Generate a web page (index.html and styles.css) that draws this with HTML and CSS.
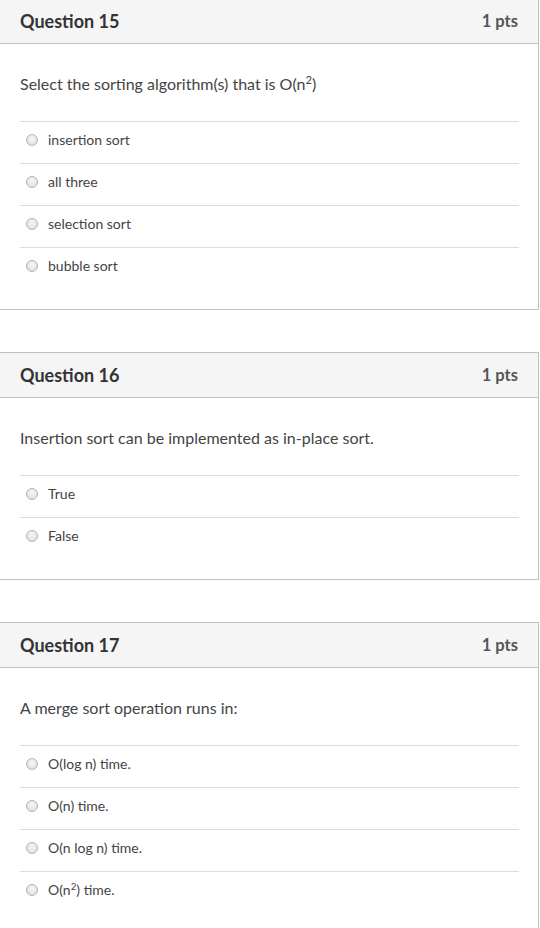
FILE: index.html
```html
<!DOCTYPE html>
<html lang="en">
<head>
<meta charset="utf-8">
<link rel="stylesheet" href="styles.css">
</head>
<body>
<div class="page">
  <section class="card">
    <header class="card-header"><h2 class="title">Question 15</h2><span class="pts">1 pts</span></header>
    <div class="card-body">
      <p class="question">Select the sorting algorithm(s) that is O(n<sup>2</sup>)</p>
      <ul class="answers">
        <li class="answer"><span class="radio"></span><span class="label">insertion sort</span></li>
        <li class="answer"><span class="radio"></span><span class="label">all three</span></li>
        <li class="answer"><span class="radio"></span><span class="label">selection sort</span></li>
        <li class="answer"><span class="radio"></span><span class="label">bubble sort</span></li>
      </ul>
    </div>
  </section>
  <section class="card">
    <header class="card-header"><h2 class="title">Question 16</h2><span class="pts">1 pts</span></header>
    <div class="card-body">
      <p class="question">Insertion sort can be implemented as in-place sort.</p>
      <ul class="answers">
        <li class="answer"><span class="radio"></span><span class="label">True</span></li>
        <li class="answer"><span class="radio"></span><span class="label">False</span></li>
      </ul>
    </div>
  </section>
  <section class="card">
    <header class="card-header"><h2 class="title">Question 17</h2><span class="pts">1 pts</span></header>
    <div class="card-body">
      <p class="question">A merge sort operation runs in:</p>
      <ul class="answers">
        <li class="answer"><span class="radio"></span><span class="label">O(log n) time.</span></li>
        <li class="answer"><span class="radio"></span><span class="label">O(n) time.</span></li>
        <li class="answer"><span class="radio"></span><span class="label">O(n log n) time.</span></li>
        <li class="answer"><span class="radio"></span><span class="label">O(n<sup>2</sup>) time.</span></li>
      </ul>
    </div>
  </section>
</div>
</body>
</html>
```
FILE: styles.css
```css
html, body {
  margin: 0;
  padding: 0;
  background: #fff;
}
body {
  font-family: Lato, "Open Sans", sans-serif;
  color: #2d3b45;
}
.page {
  margin-top: -2px;
  display: flex;
  flex-direction: column;
  gap: 42px;
}
.card {
  width: 539px;
  border: 1px solid #c1c1c1;
  border-left: 0;
  box-sizing: border-box;
}
.card-header {
  height: 44px;
  background: #f5f5f5;
  border-bottom: 1px solid #c1c1c1;
  display: flex;
  align-items: center;
  justify-content: space-between;
  padding: 0 20px;
}
.title {
  margin: 0;
  font-size: 18px;
  font-weight: 700;
  color: #333;
}
.pts {
  font-size: 16.5px;
  font-weight: 700;
  color: #555;
}
.card-body {
  padding: 29px 19px 20px 20px;
}
.question {
  margin: 0 0 26px;
  font-size: 16px;
  font-weight: 400;
  line-height: 22px;
  color: #444;
}
sup {
  font-size: 0.7em;
  line-height: 0;
  vertical-align: 0.5em;
}
.answers {
  list-style: none;
  margin: 0;
  padding: 0;
}
.answer {
  border-top: 1px solid #dcdcdc;
  height: 42px;
  display: flex;
  align-items: center;
  padding: 0 0 5px 6px;
  box-sizing: border-box;
  gap: 10px;
}
.radio {
  width: 12px;
  height: 12px;
  border-radius: 50%;
  border: 1px solid #b5b5b5;
  background: radial-gradient(circle at 50% 35%, #f7f7f7, #d9d9d9);
  box-sizing: border-box;
  flex: none;
}
.label {
  font-size: 14px;
  font-weight: 400;
  line-height: 20px;
  color: #444;
}
```
